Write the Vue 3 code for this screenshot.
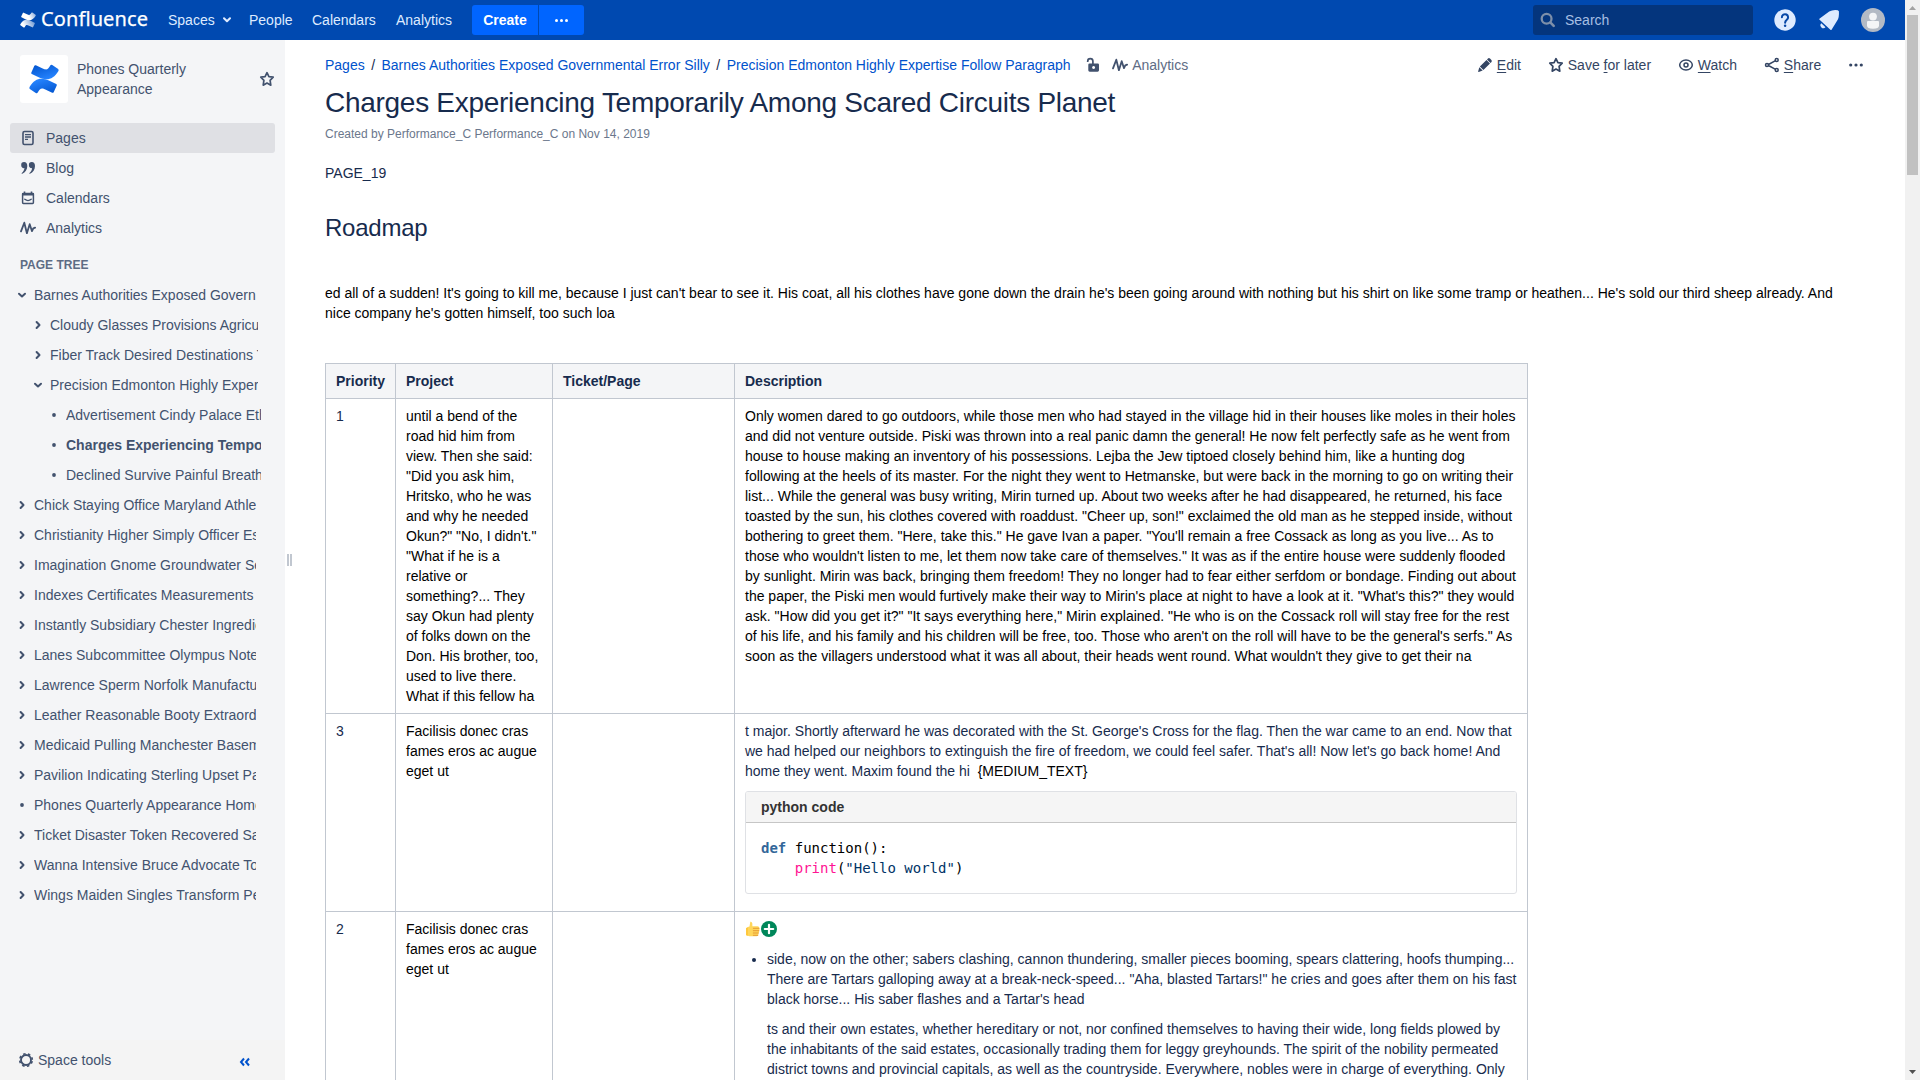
<script setup>
const nav = [
  { label: 'Pages', icon: 'page', active: true },
  { label: 'Blog', icon: 'quote' },
  { label: 'Calendars', icon: 'calendar' },
  { label: 'Analytics', icon: 'pulse' }
]

const tree = [
  { level: 0, state: 'open', label: 'Barnes Authorities Exposed Govern' },
  { level: 1, state: 'closed', label: 'Cloudy Glasses Provisions Agricultural' },
  { level: 1, state: 'closed', label: 'Fiber Track Desired Destinations Tell' },
  { level: 1, state: 'open', label: 'Precision Edmonton Highly Expertise' },
  { level: 2, state: 'leaf', label: 'Advertisement Cindy Palace Ethnic' },
  { level: 2, state: 'leaf', label: 'Charges Experiencing Temporarily', current: true },
  { level: 2, state: 'leaf', label: 'Declined Survive Painful Breathing' },
  { level: 0, state: 'closed', label: 'Chick Staying Office Maryland Athletes' },
  { level: 0, state: 'closed', label: 'Christianity Higher Simply Officer Essay' },
  { level: 0, state: 'closed', label: 'Imagination Gnome Groundwater Sections' },
  { level: 0, state: 'closed', label: 'Indexes Certificates Measurements' },
  { level: 0, state: 'closed', label: 'Instantly Subsidiary Chester Ingredients' },
  { level: 0, state: 'closed', label: 'Lanes Subcommittee Olympus Notes' },
  { level: 0, state: 'closed', label: 'Lawrence Sperm Norfolk Manufactured' },
  { level: 0, state: 'closed', label: 'Leather Reasonable Booty Extraordinary' },
  { level: 0, state: 'closed', label: 'Medicaid Pulling Manchester Basement' },
  { level: 0, state: 'closed', label: 'Pavilion Indicating Sterling Upset Pants' },
  { level: 0, state: 'leaf', label: 'Phones Quarterly Appearance Home' },
  { level: 0, state: 'closed', label: 'Ticket Disaster Token Recovered Samples' },
  { level: 0, state: 'closed', label: 'Wanna Intensive Bruce Advocate Together' },
  { level: 0, state: 'closed', label: 'Wings Maiden Singles Transform People' }
]
</script>

<template>
  <div class="app">
    <div class="window">
      <header class="topbar">
        <div class="brand">
          <svg class="mark" width="16" height="16" viewBox="0 0 32 32">
            <defs>
              <linearGradient id="wTop" x1="1" y1="0" x2="0" y2="0.3">
                <stop offset="0" stop-color="#fff" stop-opacity=".5" />
                <stop offset=".6" stop-color="#fff" />
              </linearGradient>
              <linearGradient id="wBottom" x1="0" y1="1" x2="1" y2="0.7">
                <stop offset="0" stop-color="#fff" />
                <stop offset=".3" stop-color="#fff" />
                <stop offset="1" stop-color="#fff" stop-opacity=".5" />
              </linearGradient>
            </defs>
            <path fill="url(#wBottom)" d="M.6 24.500 Q0 25.900.9 26.700 L7.200 31 Q8.700 31.600 9.300 30.400 C12 25.800 13.200 25.300 18 27.500 L24.700 30.700 Q25.800 31 26.300 30.100 L29.600 22.800 Q29.900 21.800 29 21.300 L22.300 18.100 C13.300 13.800 6.500 14.800.6 24.500Z" />
            <path fill="url(#wTop)" d="M31.400 7.500 Q32 6.100 31.100 5.300 L24.800 1 Q23.300.4 22.700 1.600 C20 6.200 18.800 6.700 14 4.500 L7.300 1.300 Q6.200 1 5.700 1.900 L2.400 9.200 Q2.100 10.200 3 10.700 L9.700 13.900 C18.700 18.200 25.500 17.200 31.400 7.500Z" />
          </svg>
          <span class="wordmark">Confluence</span>
        </div>
        <nav class="menu">
          <a class="spaces">Spaces
            <svg width="8" height="6" viewBox="0 0 8 6"><path d="M1 1.200 4 4.300 7 1.200" fill="none" stroke="currentColor" stroke-width="2" stroke-linecap="round" stroke-linejoin="round" /></svg>
          </a>
          <a class="people">People</a>
          <a class="cal">Calendars</a>
          <a>Analytics</a>
        </nav>
        <div class="create">
          <button class="btn-create">Create</button>
          <button class="btn-more"><i></i><i></i><i></i></button>
        </div>
        <div class="search">
          <svg width="16" height="16" viewBox="0 0 16 16"><circle cx="6.600" cy="6.800" r="4.900" fill="none" stroke="#7d8fa9" stroke-width="2.300" /><path d="M10.500 10.700 13.700 13.900" stroke="#7d8fa9" stroke-width="2.600" stroke-linecap="round" /></svg>
          <span>Search</span>
        </div>
        <svg class="help" width="24" height="24" viewBox="0 0 24 24">
          <circle cx="12" cy="12" r="10.700" fill="#deebff" />
          <path d="M8.900 9.300a3.100 3.100 0 1 1 4.900 2.500c-1.100.8-1.700 1.200-1.700 2.900" fill="none" stroke="#0747a6" stroke-width="2" stroke-linecap="round" />
          <circle cx="12.100" cy="17.700" r="1.250" fill="#0747a6" />
        </svg>
        <svg class="bell" width="24" height="24" viewBox="0 0 24 24">
          <path d="M2.300 11.500 Q2 10.900 2.700 10.400 L12.200 3.600 Q16 1.500 20.800 2.300 L21.900 3.300 Q22.300 9.500 20.400 12.300 L14.700 21.500 Q14.100 22.400 13.400 21.700Z" fill="#deebff" />
          <path d="M4.300 15.300 8.500 19.300A2.700 2.700 0 0 1 4.300 15.300Z" fill="#deebff" />
        </svg>
        <svg class="avatar" width="24" height="24" viewBox="0 0 24 24">
          <circle cx="12" cy="12" r="12" fill="#b3bac5" />
          <circle cx="12" cy="8.600" r="3.900" fill="#f4f5f7" />
          <path d="M6 14q0-1 1-1h10q1 0 1 1v3.500q0 3.300-6 3.300t-6-3.300z" fill="#f4f5f7" />
        </svg>
      </header>

      <div class="body">
        <aside class="sidebar">
          <div class="space">
            <div class="space-logo">
              <svg width="30" height="30" viewBox="0 0 32 32">
                <defs>
                  <linearGradient id="bTop" x1="0" y1="0" x2=".6" y2="1">
                    <stop offset="0" stop-color="#0052cc" />
                    <stop offset="1" stop-color="#2684ff" />
                  </linearGradient>
                  <linearGradient id="bBottom" x1="1" y1="1" x2=".4" y2="0">
                    <stop offset="0" stop-color="#0052cc" />
                    <stop offset="1" stop-color="#2684ff" />
                  </linearGradient>
                </defs>
                <path fill="url(#bBottom)" d="M.6 24.500 Q0 25.900.9 26.700 L7.200 31 Q8.700 31.600 9.300 30.400 C12 25.800 13.200 25.300 18 27.500 L24.700 30.700 Q25.800 31 26.300 30.100 L29.600 22.800 Q29.900 21.800 29 21.300 L22.300 18.100 C13.300 13.800 6.500 14.800.6 24.500Z" />
                <path fill="url(#bTop)" d="M31.400 7.500 Q32 6.100 31.100 5.300 L24.800 1 Q23.300.4 22.700 1.600 C20 6.200 18.800 6.700 14 4.500 L7.300 1.300 Q6.200 1 5.700 1.900 L2.400 9.200 Q2.100 10.200 3 10.700 L9.700 13.900 C18.700 18.200 25.500 17.200 31.400 7.500Z" />
              </svg>
            </div>
            <div class="space-name">Phones Quarterly Appearance</div>
            <svg class="star" width="16" height="16" viewBox="0 0 16 16"><path d="M8 1.700 9.900 5.700 14.200 6.200 11.100 9.300 11.800 14.200 8 12.100 4.200 14.200 4.900 9.300 1.800 6.200 6.100 5.700Z" fill="none" stroke="currentColor" stroke-width="1.700" stroke-linejoin="round" /></svg>
          </div>

          <ul class="nav">
            <li v-for="item in nav" :key="item.label" :class="{ active: item.active }">
              <svg v-if="item.icon === 'page'" width="16" height="16" viewBox="0 0 16 16"><rect x="3" y="1.500" width="10" height="13" rx="1.500" fill="none" stroke="currentColor" stroke-width="1.600" /><path d="M5 4.700h6M5 7h6M5 9.300h3" stroke="currentColor" stroke-width="1.300" /></svg>
              <svg v-else-if="item.icon === 'quote'" width="16" height="16" viewBox="0 0 16 16"><path d="M1.200 5.200a2.900 2.900 0 0 1 2.900-3.100c2 0 3.200 1.600 3.200 4 0 3.700-2 6.300-5 7.700-.6.200-.9-.3-.5-.7 1.500-1.300 2.500-2.900 2.600-5-1.800.3-3.200-1-3.200-2.900zM8.900 5.200a2.900 2.900 0 0 1 2.900-3.100c2 0 3.200 1.600 3.200 4 0 3.700-2 6.300-5 7.700-.6.200-.9-.3-.5-.7 1.500-1.300 2.500-2.900 2.600-5-1.800.3-3.200-1-3.200-2.900z" fill="currentColor" /></svg>
              <svg v-else-if="item.icon === 'calendar'" width="16" height="16" viewBox="0 0 16 16"><path d="M3.200 3.500h9.600q.6 0 .6.600v8.500q0 .8-.8.800H3.400q-.8 0-.8-.8V4.100q0-.6.600-.6z" fill="none" stroke="currentColor" stroke-width="1.500" /><path d="M2 3h12v2.500H2zM3.700 1.500h1.600V4H3.700zM10.700 1.500h1.600V4h-1.600z" fill="currentColor" /><path d="M4.800 9.300q3.200 2.600 6.400 0" fill="none" stroke="currentColor" stroke-width="1.400" stroke-linecap="round" /></svg>
              <svg v-else width="16" height="16" viewBox="0 0 16 16"><path d="M1 11.400 4.300 2.700 6.900 13.200 9.700 4.200 12 11.200 13.300 8.300 15.100 7.600" fill="none" stroke="currentColor" stroke-width="1.800" stroke-linecap="round" stroke-linejoin="round" /></svg>
              <span>{{ item.label }}</span>
            </li>
          </ul>

          <h5>PAGE TREE</h5>
          <ul class="tree">
            <li v-for="row in tree" :key="row.label" :class="['l' + row.level, { current: row.current }]">
              <svg v-if="row.state === 'open'" width="12" height="12" viewBox="0 0 12 12"><path d="M3 4.700 6 7.500 9 4.700" fill="none" stroke="currentColor" stroke-width="2" stroke-linecap="round" stroke-linejoin="round" /></svg>
              <svg v-else-if="row.state === 'closed'" width="12" height="12" viewBox="0 0 12 12"><path d="M4.600 3 7.500 6 4.600 9" fill="none" stroke="currentColor" stroke-width="2" stroke-linecap="round" stroke-linejoin="round" /></svg>
              <svg v-else width="12" height="12" viewBox="0 0 12 12"><circle cx="6" cy="6" r="1.900" fill="currentColor" /></svg>
              <span>{{ row.label }}</span>
            </li>
          </ul>

          <footer class="tools">
            <svg width="16" height="16" viewBox="0 0 16 16"><circle cx="8" cy="8" r="5" fill="none" stroke="currentColor" stroke-width="1.900" /><circle cx="8" cy="8" r="6.300" fill="none" stroke="currentColor" stroke-width="1.600" stroke-dasharray="2.500 2.448" stroke-dashoffset="-1.230" /></svg>
            <span>Space tools</span>
            <svg class="collapse" width="12" height="10" viewBox="0 0 12 10"><path d="M5 1.500 2 5l3 3.500M10 1.500 7 5l3 3.500" fill="none" stroke="#0052cc" stroke-width="2" /></svg>
          </footer>
        </aside>

        <div class="grip"><i></i><i></i></div>

        <main class="content">
          <div class="page-head">
            <div class="crumbs">
              <a>Pages</a><b>/</b><a>Barnes Authorities Exposed Governmental Error Silly</a><b>/</b><a>Precision Edmonton Highly Expertise Follow Paragraph</a>
              <svg class="lock" width="16" height="16" viewBox="0 0 16 16"><path d="M2.700 5V4.300a2.600 2.600 0 0 1 5.200 0V7" fill="none" stroke="currentColor" stroke-width="1.700" /><path d="M4.500 6.500h8.300q1.200 0 1.200 1.200v5.600q0 1.400-1.400 1.400H4.700q-1.400 0-1.400-1.400V7.700q0-1.200 1.200-1.200zM8.600 9a1.500 1.500 0 1 0 .01 0z" fill="currentColor" fill-rule="evenodd" /></svg>
              <svg class="pulse" width="16" height="16" viewBox="0 0 16 16"><path d="M1 11.400 4.300 2.700 6.900 13.200 9.700 4.200 12 11.200 13.300 8.300 15.100 7.600" fill="none" stroke="currentColor" stroke-width="1.800" stroke-linecap="round" stroke-linejoin="round" /></svg>
              <span class="an">Analytics</span>
            </div>
            <div class="actions">
              <a><svg width="16" height="16" viewBox="0 0 16 16"><path d="M1.200 14.300 2.300 10.200 5.700 13.500 1.700 14.900Q1 15 1.200 14.300ZM2.900 9.500 9.500 2.900 13 6.400 6.400 13ZM10 2.400 11 1.400Q12 .7 13 1.500L14.400 2.900Q15.200 3.900 14.500 4.900L13.500 5.900Z" fill="currentColor" /></svg><span><u>E</u>dit</span></a>
              <a><svg width="16" height="16" viewBox="0 0 16 16"><path d="M8 1.700 9.900 5.700 14.200 6.200 11.100 9.300 11.800 14.200 8 12.100 4.200 14.200 4.900 9.300 1.800 6.200 6.100 5.700Z" fill="none" stroke="currentColor" stroke-width="1.700" stroke-linejoin="round" /></svg><span>Save <u>f</u>or later</span></a>
              <a><svg width="16" height="16" viewBox="0 0 16 16"><ellipse cx="8" cy="8" rx="6.300" ry="5" fill="none" stroke="currentColor" stroke-width="1.500" /><circle cx="8" cy="8" r="2" fill="none" stroke="currentColor" stroke-width="1.500" /></svg><span><u>W</u>atch</span></a>
              <a><svg width="16" height="16" viewBox="0 0 16 16"><path d="M3.500 8 12.500 3.200M3.500 8l9 4.800" stroke="currentColor" stroke-width="1.500" /><g fill="#fff" stroke="currentColor" stroke-width="1.500"><circle cx="3" cy="8" r="1.500" /><circle cx="12.700" cy="3.100" r="1.500" /><circle cx="12.700" cy="12.900" r="1.500" /></g></svg><span><u>S</u>hare</span></a>
              <a><svg width="16" height="16" viewBox="0 0 16 16"><g fill="currentColor"><circle cx="2.700" cy="8" r="1.600" /><circle cx="8" cy="8" r="1.600" /><circle cx="13.300" cy="8" r="1.600" /></g></svg></a>
            </div>
          </div>
          <h1>Charges Experiencing Temporarily Among Scared Circuits Planet</h1>
          <div class="byline">Created by Performance_C Performance_C on Nov 14, 2019</div>
          <p class="pageno">PAGE_19</p>
          <h2>Roadmap</h2>
          <p class="intro">ed all of a sudden! It's going to kill me, because I just can't bear to see it. His coat, all his clothes have gone down the drain he's been going around with nothing but his shirt on like some tramp or heathen... He's sold our third sheep already. And nice company he's gotten himself, too such loa</p>

          <table>
            <colgroup><col class="c1" /><col class="c2" /><col class="c3" /><col class="c4" /></colgroup>
            <thead>
              <tr><th>Priority</th><th>Project</th><th>Ticket/Page</th><th>Description</th></tr>
            </thead>
            <tbody>
              <tr>
                <td>1</td>
                <td class="k">until a bend of the road hid him from view. Then she said: "Did you ask him, Hritsko, who he was and why he needed Okun?" "No, I didn't." "What if he is a relative or something?... They say Okun had plenty of folks down on the Don. His brother, too, used to live there. What if this fellow ha</td>
                <td></td>
                <td class="k">Only women dared to go outdoors, while those men who had stayed in the village hid in their houses like moles in their holes and did not venture outside. Piski was thrown into a real panic damn the general! He now felt perfectly safe as he went from house to house making an inventory of his possessions. Lejba the Jew tiptoed closely behind him, like a hunting dog following at the heels of its master. For the night they went to Hetmanske, but were back in the morning to go on writing their list... While the general was busy writing, Mirin turned up. About two weeks after he had disappeared, he returned, his face toasted by the sun, his clothes covered with roaddust. "Cheer up, son!" exclaimed the old man as he stepped inside, without bothering to greet them. "Here, take this." He gave Ivan a paper. "You'll remain a free Cossack as long as you live... As to those who wouldn't listen to me, let them now take care of themselves." It was as if the entire house were suddenly flooded by sunlight. Mirin was back, bringing them freedom! They no longer had to fear either serfdom or bondage. Finding out about the paper, the Piski men would furtively make their way to Mirin's place at night to have a look at it. "What's this?" they would ask. "How did you get it?" "It says everything here," Mirin explained. "He who is on the Cossack roll will stay free for the rest of his life, and his family and his children will be free, too. Those who aren't on the roll will have to be the general's serfs." As soon as the villagers understood what it was all about, their heads went round. What wouldn't they give to get their na</td>
              </tr>
              <tr>
                <td>3</td>
                <td class="k">Facilisis donec cras fames eros ac augue eget ut</td>
                <td></td>
                <td>
                  <p>t major. Shortly afterward he was decorated with the St. George's Cross for the flag. Then the war came to an end. Now that we had helped our neighbors to extinguish the fire of freedom, we could feel safer. That's all! Now let's go back home! And home they went. Maxim found the hi&nbsp; <span class="k">{MEDIUM_TEXT}</span></p>
                  <div class="code">
                    <div class="code-head">python code</div>
                    <pre><b>def</b> function():
    <em>print</em>(<q>"Hello world"</q>)</pre>
                  </div>
                </td>
              </tr>
              <tr>
                <td>2</td>
                <td class="k">Facilisis donec cras fames eros ac augue eget ut</td>
                <td></td>
                <td>
                  <div class="emotes">
                    <svg width="16" height="16" viewBox="0 0 16 16"><path d="M2 6.300 4.500 5.500 5.300.8Q6.900.4 7.300 2.300L7.400 5.300H12.500Q14.400 5.300 14.300 7 14.900 8.500 14.100 9.500 14.400 11.100 13.500 12 13.500 15.200 11.500 15.200H4.500L1 14.200V7.500Z" fill="#ffd65a" /><path d="M1 7h2v7.700L1 14z" fill="#ffc83d" /><path d="M8.300 7.300h5.700M8.300 9.700h5.600M8.300 12h5.100M8.300 14.300h4.500" stroke="#e59a35" stroke-width="1" stroke-linecap="round" /></svg>
                    <svg width="16" height="16" viewBox="0 0 16 16"><circle cx="8" cy="8" r="8" fill="#00875a" /><path d="M8 3.800v8.400M3.800 8h8.400" stroke="#fff" stroke-width="2.200" stroke-linecap="round" /></svg>
                  </div>
                  <ul class="points">
                    <li>
                      <p>side, now on the other; sabers clashing, cannon thundering, smaller pieces booming, spears clattering, hoofs thumping... There are Tartars galloping away at a break-neck-speed... "Aha, blasted Tartars!" he cries and goes after them on his fast black horse... His saber flashes and a Tartar's head</p>
                      <p>ts and their own estates, whether hereditary or not, nor confined themselves to having their wide, long fields plowed by the inhabitants of the said estates, occasionally trading them for leggy greyhounds. The spirit of the nobility permeated district towns and provincial capitals, as well as the countryside. Everywhere, nobles were in charge of everything. Only</p>
                    </li>
                  </ul>
                </td>
              </tr>
            </tbody>
          </table>
        </main>
      </div>
    </div>
    <div class="scroll">
      <svg width="15" height="15" viewBox="0 0 15 15"><path d="M4 10h7L7.500 6z" fill="#a3a3a3" /></svg>
      <div class="thumb"></div>
      <svg class="down" width="15" height="15" viewBox="0 0 15 15"><path d="M4 5h7L7.500 9z" fill="#505050" /></svg>
    </div>
  </div>
</template>

<style>
body {
  margin: 0;
  overflow: hidden;
}
</style>

<style scoped>
.app {
  display: flex;
  width: 1920px;
  height: 1080px;
  overflow: hidden;
  background: #fff;
  font: 14px/20px "Liberation Sans", Arial, sans-serif;
  color: #172b4d;
}
ul,
p,
h1,
h2,
h5 {
  margin: 0;
  padding: 0;
}
ul {
  list-style: none;
}
svg {
  flex: none;
  display: block;
}
.window {
  width: 1905px;
  height: 1080px;
  display: flex;
  flex-direction: column;
}

/* top bar */
.topbar {
  height: 40px;
  flex: none;
  display: flex;
  align-items: center;
  background: #0049b0;
  color: #deebff;
  box-sizing: border-box;
  padding: 0 20px;
}
.brand {
  display: flex;
  align-items: center;
  width: 148px;
}
.mark {
  margin-top: -1px;
}
.wordmark {
  margin-left: 5px;
  font: 20px/38px "Noto Sans", "Open Sans", sans-serif;
  letter-spacing: 0.1px;
  -webkit-text-stroke: 0.25px #fff;
  color: #fff;
  height: 40px;
}
.menu {
  display: flex;
}
.spaces {
  display: flex;
  align-items: center;
  width: 81px;
}
.spaces svg {
  margin-left: 8px;
}
.people {
  width: 63px;
}
.cal {
  width: 84px;
}
.create {
  display: flex;
  gap: 1px;
  margin-left: 20px;
}
button {
  border: 0;
  padding: 0;
  height: 30px;
  background: #0065ff;
  color: #fff;
  font: bold 14px/30px "Liberation Sans", Arial, sans-serif;
}
.menu a:last-child {
  width: 56px;
}
.btn-create {
  width: 66px;
  border-radius: 3px 0 0 3px;
}
.btn-more {
  width: 45px;
  border-radius: 0 3px 3px 0;
  display: flex;
  align-items: center;
  justify-content: center;
  gap: 2px;
}
.btn-more i {
  width: 3px;
  height: 3px;
  border-radius: 50%;
  background: #fff;
}
.search {
  margin-left: auto;
  width: 220px;
  height: 30px;
  box-sizing: border-box;
  padding-left: 7px;
  display: flex;
  align-items: center;
  gap: 9px;
  border-radius: 3px;
  background: #04357d;
  color: #a6bfe3;
}
.help {
  margin-left: 20px;
}
.bell {
  margin-left: 20px;
}
.avatar {
  margin-left: 20px;
}

/* sidebar */
.body {
  flex: 1;
  min-height: 0;
  display: flex;
}
.sidebar {
  width: 285px;
  flex: none;
  background: #f4f5f7;
  color: #42526e;
  display: flex;
  flex-direction: column;
}
.space {
  display: flex;
  align-items: center;
  height: 48px;
  padding: 15px 10px 20px 20px;
}
.space-logo {
  width: 48px;
  height: 48px;
  border-radius: 3px;
  background: #fff;
  display: flex;
  align-items: center;
  justify-content: center;
}
.space-name {
  width: 130px;
  margin-left: 9px;
}
.star {
  margin-left: auto;
}
.nav li {
  display: flex;
  align-items: center;
  gap: 10px;
  height: 30px;
  margin: 0 10px;
  padding-left: 10px;
  border-radius: 3px;
}
.nav li.active {
  background: #dfe0e4;
}
h5 {
  font-size: 12px;
  line-height: 20px;
  font-weight: bold;
  color: #5e6c84;
  margin: 12px 0 5px 20px;
}
.tree li {
  display: flex;
  align-items: center;
  gap: 6px;
  height: 30px;
  padding-left: 16px;
}
.tree span {
  overflow: hidden;
  white-space: nowrap;
  width: 222px;
}
.tree .l1 {
  padding-left: 32px;
}
.tree .l1 span {
  width: 208px;
}
.tree .l2 {
  padding-left: 48px;
}
.tree .l2 span {
  width: 195px;
}
.tree .current {
  font-weight: bold;
}
.tools {
  margin-top: auto;
  height: 40px;
  display: flex;
  align-items: center;
  padding: 0 34px 0 18px;
  gap: 4px;
  background: #f4f4f4;
}
.collapse {
  margin: 4px 0 0 auto;
}
.grip {
  width: 20px;
  flex: none;
  box-sizing: border-box;
  padding: 514px 0 0 2px;
  display: flex;
  gap: 1px;
}
.grip i {
  width: 2px;
  height: 12px;
  background: #c1c7d0;
}

/* page */
.content {
  width: 1540px;
  margin-left: 20px;
  overflow: hidden;
}
.page-head {
  display: flex;
  justify-content: space-between;
  height: 20px;
  margin-top: 15px;
}
.crumbs {
  display: flex;
  align-items: center;
}
.crumbs a {
  color: #0052cc;
}
.crumbs b {
  font-weight: normal;
  width: 16.8px;
  text-align: center;
}
.lock {
  margin-left: 14.5px;
  color: #42526e;
}
.pulse {
  margin: 0 4px 0 11px;
  color: #42526e;
}
.an {
  color: #5e6c84;
}
.actions {
  display: flex;
  gap: 26.8px;
  margin-right: 1px;
  color: #344563;
}
.actions a {
  display: flex;
  align-items: center;
  gap: 4px;
}
u {
  text-underline-offset: 2px;
}
h1 {
  font-size: 28px;
  line-height: 32px;
  font-weight: normal;
  letter-spacing: -0.28px;
  margin-top: 12px;
}
.byline {
  font-size: 12px;
  color: #6b778c;
  margin-top: 5px;
}
.pageno {
  margin-top: 19px;
}
h2 {
  font-size: 24px;
  line-height: 28px;
  font-weight: normal;
  letter-spacing: -0.24px;
  margin-top: 31px;
}
.intro {
  color: #000;
  margin: 41px 0 40px;
  padding-right: 20px;
}
.k {
  color: #000;
}
table {
  width: 1203px;
  table-layout: fixed;
  border-collapse: collapse;
}
.c1 {
  width: 70px;
}
.c2 {
  width: 157px;
}
.c3 {
  width: 182px;
}
th,
td {
  border: 1px solid #c1c7d0;
  padding: 7px 10px;
  text-align: left;
  vertical-align: top;
}
th {
  background: #f4f5f7;
  font-weight: bold;
}
.code {
  margin: 10px 0;
  border: 1px solid #dfe1e5;
  border-radius: 3px;
  overflow: hidden;
}
.code-head {
  background: #f5f5f5;
  border-bottom: 1px solid #c6c6c6;
  padding: 5px 15px;
  font-weight: bold;
  color: #333;
}
pre {
  margin: 0;
  padding: 15px;
  font: 14px/20px "DejaVu Sans Mono", monospace;
  color: #000;
}
pre b {
  color: #369;
}
pre em {
  font-style: normal;
  color: #ff1493;
}
pre q {
  quotes: none;
  color: #003366;
}
.emotes {
  display: flex;
  height: 20px;
  align-items: center;
}
.points {
  list-style: disc;
  padding-left: 22px;
  margin-top: 10px;
}
.points p + p {
  margin-top: 10px;
}

/* scroll track */
.scroll {
  width: 15px;
  background: #f1f1f1;
  display: flex;
  flex-direction: column;
}
.thumb {
  width: 11px;
  height: 160px;
  margin-left: 2px;
  background: #c1c1c1;
}
.down {
  margin-top: auto;
}
</style>
